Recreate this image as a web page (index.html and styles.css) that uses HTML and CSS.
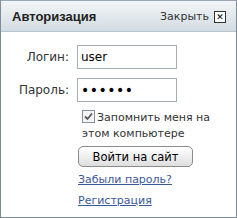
FILE: index.html
```html
<!DOCTYPE html>
<html lang="ru">
<head>
  <meta charset="UTF-8" />
  <title>Авторизация</title>
  <link rel="stylesheet" href="styles.css">
</head>
<body>
  <div class="panel">
    <div class="panel-head">
      <span class="title">Авторизация</span>
      <a class="close" href="#">Закрыть <span class="close-box">&#x2715;</span></a>
    </div>
    <form class="panel-body">
      <div class="row">
        <label for="login">Логин:</label>
        <input type="text" id="login" value="user">
      </div>
      <div class="row">
        <label for="pass">Пароль:</label>
        <input type="password" id="pass" class="pass" value="secret">
      </div>
      <div class="options">
        <label class="remember"><span class="check"><svg width="11" height="11" viewBox="0 0 11 11"><path d="M2 5.5 L4.5 8 L9 2.5" fill="none" stroke="#555" stroke-width="1.8"/></svg></span>Запомнить меня на этом компьютере</label>
        <button type="button" class="btn">Войти на сайт</button>
        <a href="#" class="link">Забыли пароль?</a>
        <a href="#" class="link">Регистрация</a>
      </div>
    </form>
  </div>
</body>
</html>
```

FILE: styles.css
```css
body {
  margin: 0;
  font-family: "DejaVu Sans", Verdana, sans-serif;
  font-size: 12px;
  color: #333;
  background: #fff;
}
.panel {
  width: 237px;
  height: 218px;
  box-sizing: border-box;
  border: 1px solid #7d8d98;
  border-top-color: #9aa7b0;
  overflow: hidden;
}
.panel-head {
  height: 31px;
  box-sizing: border-box;
  display: flex;
  align-items: center;
  justify-content: space-between;
  padding: 1px 10px 0 11px;
  background: linear-gradient(#f2f5f7, #d3dce2);
  border-bottom: 1px solid #b9c5cd;
}
.title {
  font-family: "Liberation Sans", Arial, sans-serif;
  font-weight: bold;
  font-size: 13px;
  color: #222;
}
.close {
  display: flex;
  align-items: center;
  gap: 5px;
  font-size: 11px;
  color: #333;
  text-decoration: none;
}
.close-box {
  width: 10px;
  height: 10px;
  border: 1px solid #333;
  background: #fff;
  font-size: 9px;
  font-weight: bold;
  line-height: 10px;
  text-align: center;
  color: #000;
}
.panel-body {
  padding: 13px 0 0 0;
  margin: 0;
}
.row {
  display: flex;
  align-items: center;
  margin-bottom: 9px;
}
.row label {
  width: 68px;
  text-align: right;
  margin-right: 8px;
  font-size: 12px;
}
.row input {
  width: 100px;
  height: 24px;
  box-sizing: border-box;
  border: 1px solid #a5acb2;
  padding: 2px 3px;
  font-family: "DejaVu Sans", Verdana, sans-serif;
  font-size: 12px;
  color: #000;
}
.row .pass {
  font-size: 14px;
  letter-spacing: 0.5px;
}
.options {
  display: flex;
  flex-direction: column;
  align-items: flex-start;
  padding-left: 77px;
  margin-top: -1px;
}
.remember {
  display: block;
  width: 132px;
  padding-left: 4px;
  font-size: 11px;
  line-height: 16px;
}
.check {
  display: inline-block;
  width: 11px;
  height: 11px;
  border: 1px solid #8a9196;
  background: #f4f4f4;
  vertical-align: -2px;
  margin-right: 2px;
  position: relative;
}
.check svg {
  position: absolute;
  left: 0;
  top: 0;
}
.btn {
  margin-top: 4px;
  width: 115px;
  height: 21px;
  border: 1px solid #8c8c8c;
  border-radius: 5px;
  background: linear-gradient(#ffffff, #dedede);
  font-family: "DejaVu Sans", Verdana, sans-serif;
  font-size: 11.5px;
  color: #000;
  padding: 0;
}
.link {
  color: #3b5998;
  font-size: 11px;
  line-height: 14px;
  margin-top: 6px;
}
.link + .link {
  margin-top: 7px;
}
```
